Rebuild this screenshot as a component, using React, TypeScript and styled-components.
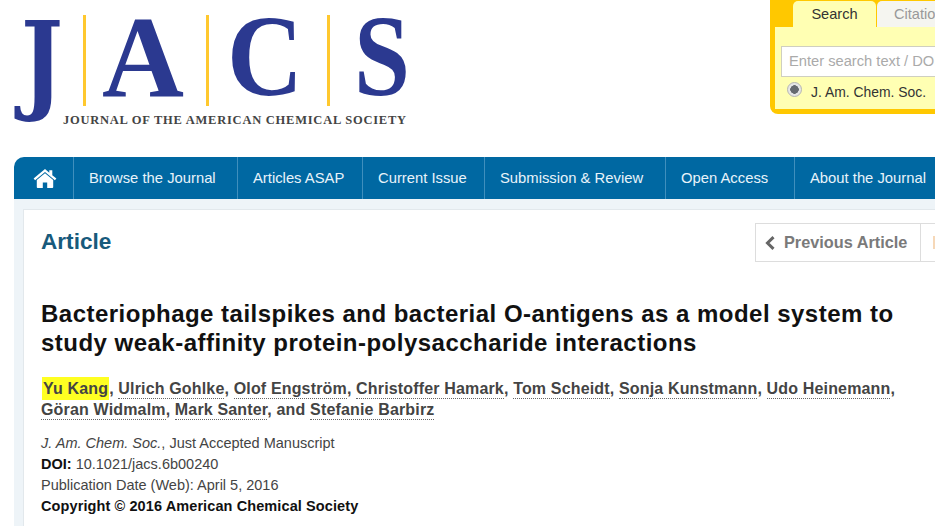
import * as React from "react";
import styled, { createGlobalStyle } from "styled-components";

/** JACS article page, top of the fold */
const GlobalStyle = createGlobalStyle`
    html, body {
        margin: 0;
        padding: 0;
        background: #ffffff;
        overflow: hidden;
    }
    * { box-sizing: border-box; }
`;

const Page = styled.div`
    width: 935px;
    height: 526px;
    overflow: hidden;
    font-family: "Liberation Sans", Arial, sans-serif;
    background: #ffffff;
`;

const Header = styled.header`
    display: flex;
    justify-content: space-between;
    align-items: flex-start;
    height: 157px;
`;

const LogoBox = styled.svg`
    display: block;
    width: 420px;
    height: 140px;
    flex-shrink: 0;
`;

const SearchBox = styled.div`
    width: 165px;
    height: 114px;
    flex-shrink: 0;
    overflow: hidden;
    background: #ffc800;
    border-radius: 0 0 0 8px;
    padding: 1px 0 5px 5px;
    display: flex;
    flex-direction: column;
`;

const TabRow = styled.div`
    display: flex;
    gap: 1px;
    padding-left: 18px;
    height: 26px;
    flex-shrink: 0;
`;

const Tab = styled.div<{ $active?: boolean }>`
    flex-shrink: 0;
    width: ${props => (props.$active ? "83px" : "90px")};
    border-radius: 5px 5px 0 0;
    background: ${props => (props.$active ? "#ffffb3" : "#f5f5f0")};
    color: ${props => (props.$active ? "#333333" : "#999999")};
    font-size: 14.6px;
    line-height: 26px;
    text-align: ${props => (props.$active ? "center" : "left")};
    padding-left: ${props => (props.$active ? "0" : "17px")};
    white-space: nowrap;
`;

const SearchBody = styled.div`
    flex: 1;
    background: #ffffb3;
    padding: 19px 0 0 6px;
`;

const SearchInput = styled.div`
    height: 31px;
    width: 200px;
    border: 1px solid #cfcfc0;
    background: #ffffff;
    color: #aaaaaa;
    font-size: 14.7px;
    line-height: 28px;
    padding-left: 7px;
    white-space: nowrap;
`;

const RadioRow = styled.div`
    display: flex;
    align-items: flex-start;
    gap: 9px;
    padding: 5px 0 0 6px;
    color: #333333;
    font-size: 13.9px;
    line-height: 20px;
    white-space: nowrap;
`;

const Radio = styled.span`
    width: 15px;
    height: 15px;
    border-radius: 50%;
    border: 1px solid #b5b5b5;
    background: radial-gradient(circle, #666a70 0 4px, #e6e6e6 4.5px);
    flex-shrink: 0;
`;

const Nav = styled.nav`
    margin-left: 14px;
    height: 42px;
    display: flex;
    background: #0068a2;
    border-radius: 10px 0 0 0;
`;

const NavItem = styled.a<{ $width: number }>`
    flex-shrink: 0;
    width: ${props => props.$width}px;
    padding-left: 15px;
    border-right: 1px solid #3f8fbd;
    color: #e8f3fa;
    font-size: 14.8px;
    line-height: 42px;
    white-space: nowrap;
    &:last-child { border-right: 0; }
`;

const HomeItem = styled.a`
    flex-shrink: 0;
    width: 60px;
    padding: 1px 0 0 2px;
    border-right: 1px solid #3f8fbd;
    display: flex;
    align-items: center;
    justify-content: center;
`;

const Main = styled.main`
    margin-left: 14px;
    height: 327px;
    padding: 10px 0 0 9px;
    background: #eef4f8;
`;

const Panel = styled.section`
    height: 100%;
    background: #ffffff;
    border-top: 1px solid #e2e8ec;
    border-left: 1px solid #e2e8ec;
    padding: 0 0 0 17px;
`;

const TopRow = styled.div`
    display: flex;
    justify-content: space-between;
    align-items: flex-start;
    height: 89px;
    padding-top: 13px;
`;

const SectionTitle = styled.h2`
    margin: 6px 0 0;
    font-size: 22.6px;
    line-height: 26px;
    font-weight: bold;
    color: #175a7c;
`;

const Pager = styled.div`
    display: flex;
    height: 39px;
    border: 1px solid #dddddd;
    border-right: 0;
    width: 180px;
    flex-shrink: 0;
`;

const PagerButton = styled.a`
    display: flex;
    align-items: center;
    gap: 9px;
    width: 165px;
    flex-shrink: 0;
    padding-left: 9px;
    border-right: 1px solid #dddddd;
    color: #7a7a7a;
    font-size: 16.3px;
    font-weight: bold;
    white-space: nowrap;
`;

const NextHint = styled.span`
    width: 3px;
    height: 13px;
    margin: 12px 0 0 12px;
    background: #f6d8b8;
`;

const Title = styled.h1`
    margin: 0;
    font-size: 24px;
    letter-spacing: 0.48px;
    line-height: 29px;
    font-weight: bold;
    color: #111111;
    white-space: nowrap;
`;

const Authors = styled.p`
    margin: 21px 0 0;
    font-size: 16px;
    letter-spacing: 0.16px;
    line-height: 21px;
    font-weight: bold;
    color: #444444;
    white-space: nowrap;
`;

const Author = styled.span`
    padding-bottom: 1px;
    border-bottom: 1px dotted #666666;
`;

const HighlightedAuthor = styled.span`
    margin-left: 1px;
    padding: 3px 1px;
    background: #ffff22;
`;

const Meta = styled.div`
    margin-top: 13px;
    font-size: 14.5px;
    line-height: 21px;
    color: #444444;
    white-space: nowrap;
`;

const MetaLine = styled.div`
    color: inherit;
`;

const CopyrightLine = styled.div`
    color: #111111;
    font-weight: bold;
    letter-spacing: 0.1px;
`;

const DoiLabel = styled.b`
    color: #111111;
`;

const line1 = ["Ulrich Gohlke", "Olof Engström", "Christoffer Hamark", "Tom Scheidt", "Sonja Kunstmann", "Udo Heinemann"];

const navItems = [
    { label: "Browse the Journal", width: 164 },
    { label: "Articles ASAP", width: 125 },
    { label: "Current Issue", width: 122 },
    { label: "Submission & Review", width: 181 },
    { label: "Open Access", width: 129 },
    { label: "About the Journal", width: 141 },
];

const Logo = () => (
    <LogoBox viewBox="0 0 420 140">
        <g fill="#ffc82e">
            <rect x="83" y="15" width="3" height="91" />
            <rect x="206" y="15" width="3" height="91" />
            <rect x="327" y="15" width="3" height="91" />
        </g>
        <g fill="#2b3990" fontFamily="'Liberation Serif', serif" fontWeight="bold">
            <text x="102" y="96" fontSize="116" textLength="82" lengthAdjust="spacingAndGlyphs">A</text>
            <text x="227" y="95" fontSize="116" textLength="76" lengthAdjust="spacingAndGlyphs">C</text>
            <text x="354" y="95" fontSize="116" textLength="56" lengthAdjust="spacingAndGlyphs">S</text>
        </g>
        {/* the logo J hangs below the baseline, DejaVu Serif has the same tail */}
        <text x="21" y="99" fontSize="108" fill="#2b3990" fontFamily="'DejaVu Serif', serif" fontWeight="bold" textLength="42" lengthAdjust="spacingAndGlyphs">J</text>
        <text x="63" y="124" fontSize="12.5" fontWeight="bold" fill="#444444" fontFamily="'Liberation Serif', serif" textLength="343" lengthAdjust="spacing">
            JOURNAL OF THE AMERICAN CHEMICAL SOCIETY
        </text>
    </LogoBox>
);

const HomeIcon = () => (
    <svg width="24" height="20" viewBox="0 0 24 20">
        <path fill="#ffffff" d="M12 4.2 3.8 11v7.2c0 .5.4.8.8.8h5.2v-5.6h4.4V19h5.2c.4 0 .8-.3.8-.8V11z" />
        <path fill="#ffffff" d="M12 0 .6 9.6l1.5 1.7L12 3l9.9 8.3 1.5-1.7-4.1-3.4V1.2h-3v2.5z" />
    </svg>
);

const ChevronLeft = () => (
    <svg width="10" height="14" viewBox="0 0 10 14">
        <path d="M8.5 1.2 2.5 7l6 5.8" fill="none" stroke="#666666" strokeWidth="3" />
    </svg>
);

const App = () => (
    <Page>
        <GlobalStyle />
        <Header>
            <Logo />
            <SearchBox>
                <TabRow>
                    <Tab $active>Search</Tab>
                    <Tab>Citation</Tab>
                </TabRow>
                <SearchBody>
                    <SearchInput>Enter search text / DOI</SearchInput>
                    <RadioRow>
                        <Radio />
                        <span>J. Am. Chem. Soc.</span>
                    </RadioRow>
                </SearchBody>
            </SearchBox>
        </Header>
        <Nav>
            <HomeItem><HomeIcon /></HomeItem>
            {navItems.map(item => (
                <NavItem key={item.label} $width={item.width}>{item.label}</NavItem>
            ))}
        </Nav>
        <Main>
            <Panel>
                <TopRow>
                    <SectionTitle>Article</SectionTitle>
                    <Pager>
                        <PagerButton><ChevronLeft />Previous Article</PagerButton>
                        <NextHint />
                    </Pager>
                </TopRow>
                <Title>
                    Bacteriophage tailspikes and bacterial O-antigens as a model system to<br />
                    study weak-affinity protein-polysaccharide interactions
                </Title>
                <Authors>
                    <HighlightedAuthor>Yu Kang</HighlightedAuthor>
                    {line1.map(name => (
                        <React.Fragment key={name}>, <Author>{name}</Author></React.Fragment>
                    ))},<br />
                    <Author>Göran Widmalm</Author>, <Author>Mark Santer</Author>, and <Author>Stefanie Barbirz</Author>
                </Authors>
                <Meta>
                    <MetaLine><i>J. Am. Chem. Soc.</i>, Just Accepted Manuscript</MetaLine>
                    <MetaLine><DoiLabel>DOI:</DoiLabel> 10.1021/jacs.6b00240</MetaLine>
                    <MetaLine>Publication Date (Web): April 5, 2016</MetaLine>
                    <CopyrightLine>Copyright © 2016 American Chemical Society</CopyrightLine>
                </Meta>
            </Panel>
        </Main>
    </Page>
);

export default App;
